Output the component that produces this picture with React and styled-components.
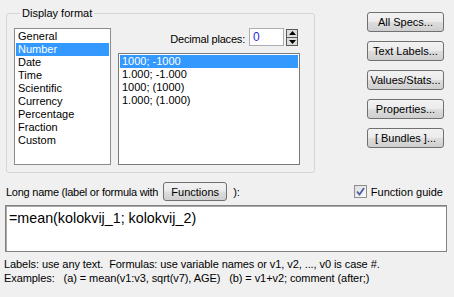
import React from "react";
import styled, { createGlobalStyle } from "styled-components";

const Global = createGlobalStyle`
  html, body { margin: 0; padding: 0; background: #f0f0f0; }
  * { box-sizing: border-box; }
`;

const Page = styled.div`
  width: 454px;
  height: 297px;
  background: #f0f0f0;
  font-family: "Liberation Sans", Arial, sans-serif;
  font-size: 11px;
  color: #000;
  overflow: hidden;
  display: flex;
  flex-direction: column;
`;

const TopRow = styled.div`
  display: flex;
  align-items: flex-start;
  padding-left: 6px;
`;

const Group = styled.fieldset`
  margin: 7px 0 0 0;
  width: 309px;
  height: 166px;
  border: 1px solid #d5d5d5;
  border-radius: 3px;
  padding: 8px 0 0 7px;
  display: flex;
  gap: 7px;
  align-items: flex-start;
  min-width: 0;
`;

const Legend = styled.legend`
  margin-left: 6px;
  padding: 0 2px;
  font-size: 11px;
  line-height: 13px;
`;

const ListBox = styled.div`
  width: ${(p) => p.$w}px;
  height: ${(p) => p.$h}px;
  background: #fff;
  border: 1px solid ${(p) => p.$border};
  padding: 1px;
  display: flex;
  flex-direction: column;
`;

const Item = styled.div`
  height: 13px;
  line-height: 13px;
  padding-left: 2px;
  white-space: nowrap;
  background: ${(p) => (p.$sel ? "#3399ff" : "transparent")};
  color: ${(p) => (p.$sel ? "#fff" : "#000")};
`;

const RightCol = styled.div`
  display: flex;
  flex-direction: column;
  align-items: flex-end;
  gap: 7px;
`;

const DecRow = styled.div`
  display: flex;
  align-items: center;
  height: 18px;
  padding-right: 2px;
`;

const DecLabel = styled.span`
  margin-right: 4px;
  margin-top: 4px;
  letter-spacing: -0.2px;
`;

const NumInput = styled.div`
  width: 35px;
  height: 18px;
  background: #fff;
  border: 1px solid #abadb3;
  color: #2b2bd0;
  font-size: 12px;
  line-height: 16px;
  padding-left: 3px;
`;

const Spinner = styled.div`
  margin-left: 2px;
  width: 12px;
  height: 17px;
  display: flex;
  flex-direction: column;
  border: 1px solid #5a5a5a;
  background: #5a5a5a;
  gap: 1px;
`;

const SpinBtn = styled.div`
  flex: 1;
  background: #dcdcdc;
  display: flex;
  align-items: center;
  justify-content: center;
`;

const ButtonCol = styled.div`
  margin: 12px 0 0 52px;
  display: flex;
  flex-direction: column;
  gap: 9px;
`;

const Button = styled.div`
  width: ${(p) => p.$w || 77}px;
  height: ${(p) => p.$h || 20}px;
  margin-left: ${(p) => p.$ml || 0}px;
  border: 1px solid #707070;
  border-radius: 3px;
  background: linear-gradient(#f2f2f2 0%, #ebebeb 48%, #dddddd 52%, #cfcfcf 100%);
  display: flex;
  align-items: center;
  justify-content: center;
  white-space: nowrap;
  font-size: 11px;
`;

const NameRow = styled.div`
  margin-top: 9px;
  height: 19px;
  display: flex;
  align-items: center;
  padding: 0 6px;
`;

const NameLabel = styled.span`
  letter-spacing: -0.25px;
  white-space: nowrap;
`;

const Paren = styled.span`
  margin-left: 6px;
`;

const Check = styled.label`
  margin-left: auto;
  margin-right: 5px;
  display: flex;
  align-items: center;
  gap: 4px;
`;

const Box = styled.span`
  width: 13px;
  height: 13px;
  border: 1px solid #8f8f8f;
  background: linear-gradient(135deg, #dcdcdc, #fbfbfb);
  display: flex;
  align-items: center;
  justify-content: center;
`;

const Editor = styled.div`
  margin: 4px 7px 0 5px;
  height: 47px;
  background: #fff;
  border: 1px solid #828282;
  box-shadow: inset 1px 1px 0 #a8a8a8;
  font-size: 14.3px;
  padding: 3px 0 0 3px;
  line-height: 18px;
`;

const Help = styled.div`
  margin: 5px 0 0 4px;
  line-height: 14px;
  white-space: pre;
  letter-spacing: -0.08px;
`;

const Arrow = ({ up }) => (
  <svg width="7" height="5" viewBox="0 0 7 5">
    {up ? (
      <path d="M3.5 0 L7 4 L0 4 Z" fill="#000" />
    ) : (
      <path d="M0 1 L7 1 L3.5 5 Z" fill="#000" />
    )}
  </svg>
);

export default function App() {
  const formats = ["General", "Number", "Date", "Time", "Scientific", "Currency", "Percentage", "Fraction", "Custom"];
  const nums = ["1000; -1000", "1.000; -1.000", "1000; (1000)", "1.000; (1.000)"];
  return (
    <Page>
      <Global />
      <TopRow>
        <Group>
          <Legend>Display format</Legend>
          <ListBox $w={97} $h={137} $border="#8c8c8c">
            {formats.map((f) => (
              <Item key={f} $sel={f === "Number"}>{f}</Item>
            ))}
          </ListBox>
          <RightCol>
            <DecRow>
              <DecLabel>Decimal places:</DecLabel>
              <NumInput>0</NumInput>
              <Spinner>
                <SpinBtn><Arrow up /></SpinBtn>
                <SpinBtn><Arrow /></SpinBtn>
              </Spinner>
            </DecRow>
            <ListBox $w={182} $h={112} $border="#7a7a7a">
              {nums.map((n, i) => (
                <Item key={n} $sel={i === 0}>{n}</Item>
              ))}
            </ListBox>
          </RightCol>
        </Group>
        <ButtonCol>
          <Button>All Specs...</Button>
          <Button>Text Labels...</Button>
          <Button>Values/Stats...</Button>
          <Button>Properties...</Button>
          <Button>[ Bundles ]...</Button>
        </ButtonCol>
      </TopRow>
      <NameRow>
        <NameLabel>Long name (label or formula with</NameLabel>
        <Button $w={64} $h={19} $ml={5}>Functions</Button>
        <Paren>):</Paren>
        <Check>
          <Box>
            <svg width="9" height="9" viewBox="0 0 9 9">
              <path d="M1 4.5 L3.5 7.5 L8 1" stroke="#4a5fa8" strokeWidth="1.8" fill="none" />
            </svg>
          </Box>
          Function guide
        </Check>
      </NameRow>
      <Editor>=mean(kolokvij_1; kolokvij_2)</Editor>
      <Help>
        {"Labels: use any text.  Formulas: use variable names or v1, v2, ..., v0 is case #.\nExamples:   (a) = mean(v1:v3, sqrt(v7), AGE)   (b) = v1+v2; comment (after;)"}
      </Help>
    </Page>
  );
}
